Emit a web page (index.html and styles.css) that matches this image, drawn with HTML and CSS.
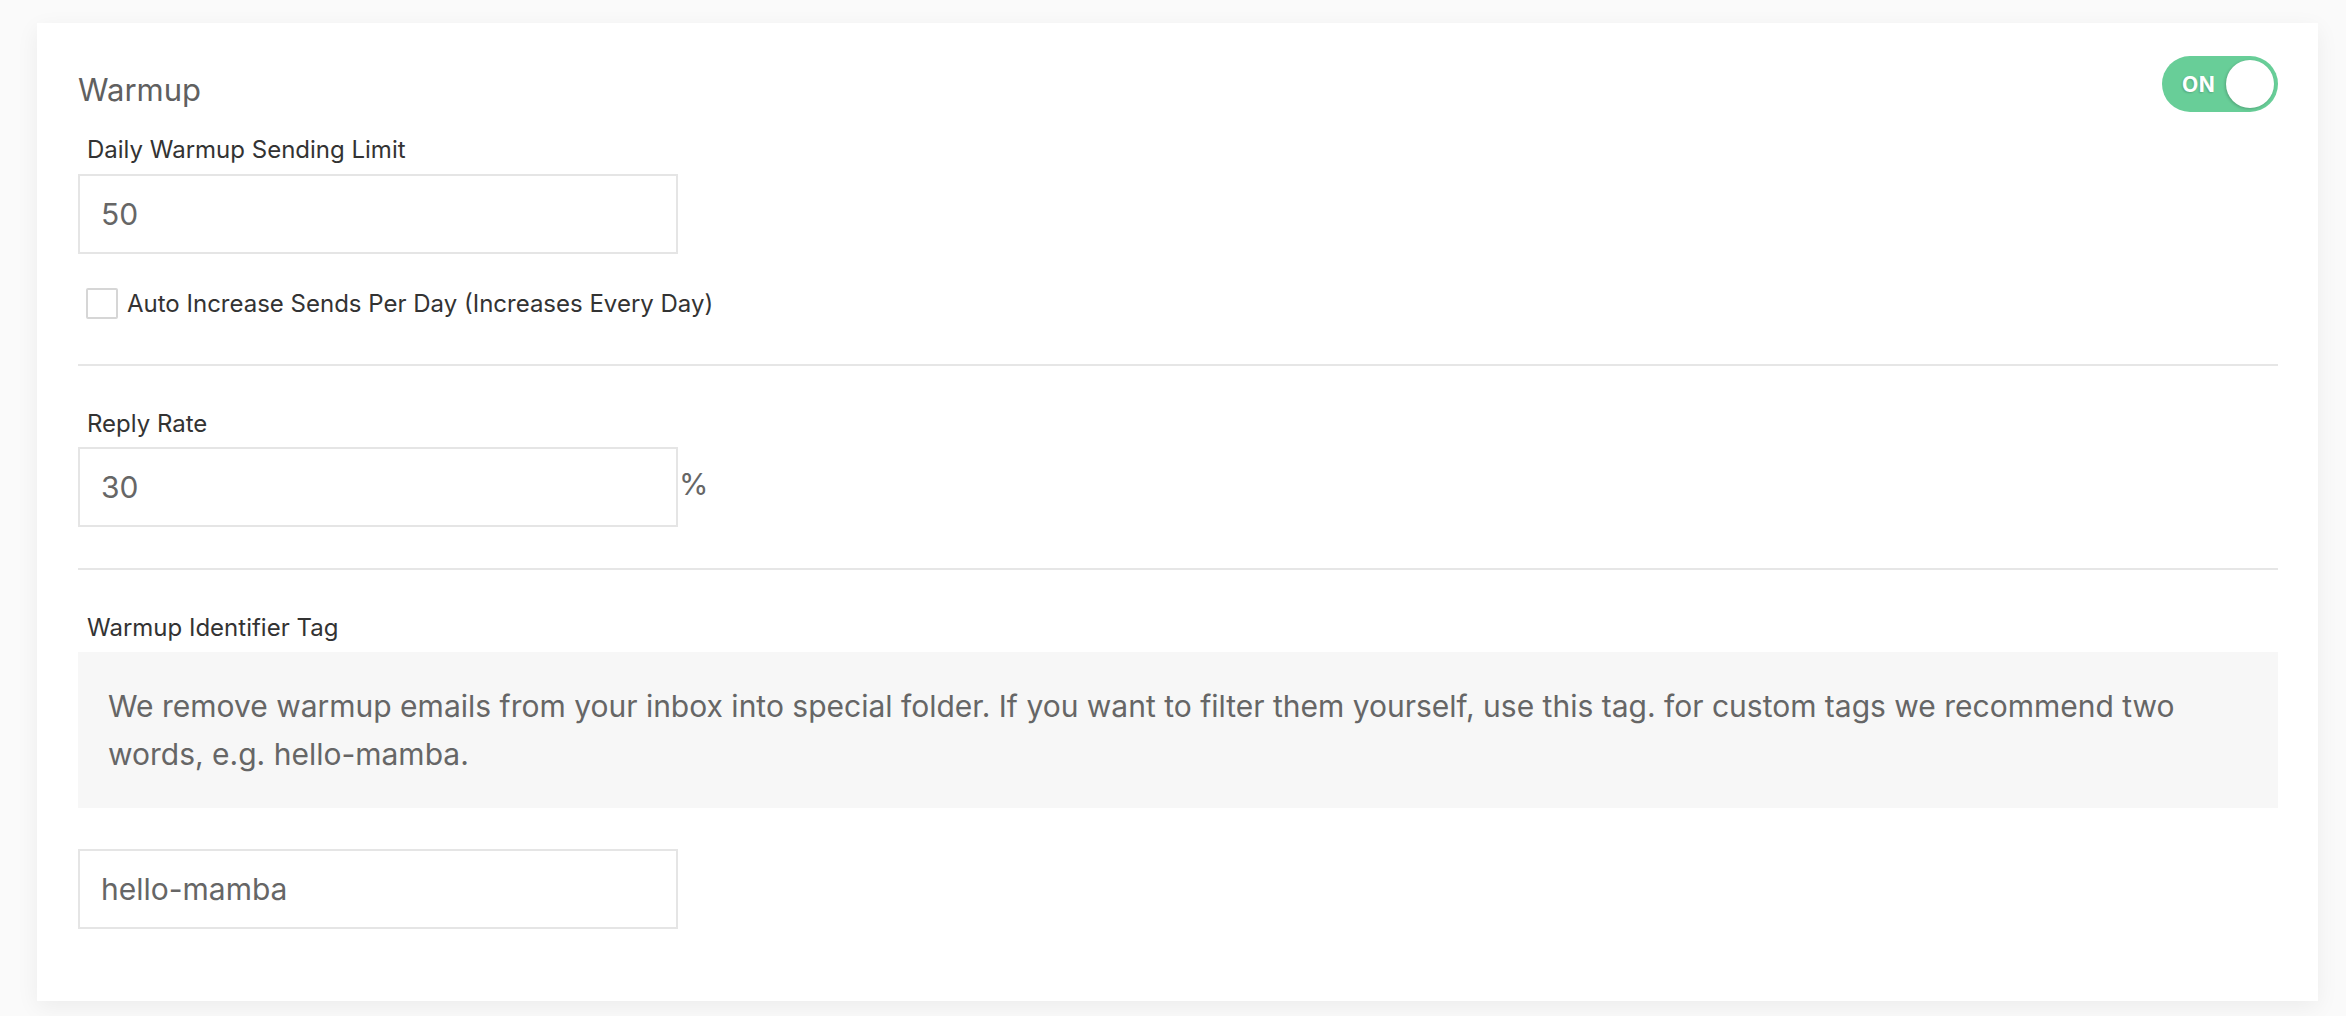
FILE: index.html
```html
<!DOCTYPE html>
<html lang="en">
<head>
<meta charset="utf-8">
<title>Warmup</title>
<link rel="stylesheet" href="styles.css">
</head>
<body>
<div class="page">
  <section class="card">
    <div class="header">
      <h2 class="title">Warmup</h2>
      <div class="toggle">
        <span class="toggle-text">ON</span>
        <span class="knob"></span>
      </div>
    </div>

    <label class="field-label first">Daily Warmup Sending Limit</label>
    <div class="input">50</div>
    <div class="check-row">
      <span class="checkbox"></span>
      <span class="check-label">Auto Increase Sends Per Day (Increases Every Day)</span>
    </div>

    <div class="divider"></div>

    <label class="field-label second">Reply Rate</label>
    <div class="input-row">
      <div class="input">30</div>
      <span class="suffix">%</span>
    </div>

    <div class="divider second-divider"></div>

    <label class="field-label third">Warmup Identifier Tag</label>
    <div class="note">We remove warmup emails from your inbox into special folder. If you want to filter them yourself, use this tag. for custom tags we recommend two words, e.g. hello-mamba.</div>
    <div class="input tag-input">hello-mamba</div>
  </section>
</div>
</body>
</html>
```

FILE: styles.css
```css
html, body {
  margin: 0;
  padding: 0;
}
body {
  background: #fafafa;
  font-family: Inter, "Noto Sans", "Liberation Sans", sans-serif;
  width: 2346px;
  height: 1016px;
  overflow: hidden;
}
.page {
  padding: 23px 28px 0 37px;
}
.card {
  background: #ffffff;
  box-shadow: 0 6px 22px rgba(0, 0, 0, 0.06);
  padding: 33px 40px 72px 41px;
  display: flex;
  flex-direction: column;
}
.header {
  display: flex;
  justify-content: space-between;
  align-items: flex-start;
  height: 56px;
}
.title {
  margin: 0;
  padding-top: 14px;
  font-size: 31px;
  line-height: 40px;
  font-weight: 400;
  color: #606060;
}
.toggle {
  width: 116px;
  height: 56px;
  border-radius: 28px;
  background: #68ce98;
  display: flex;
  align-items: center;
  justify-content: space-between;
  padding: 0 4px 0 20px;
  box-sizing: border-box;
}
.toggle-text {
  color: #ffffff;
  font-weight: 700;
  font-size: 21px;
  letter-spacing: 0.5px;
  text-shadow: -1px 1px 2px rgba(0, 0, 0, 0.18);
}
.knob {
  width: 48px;
  height: 48px;
  border-radius: 50%;
  background: #ffffff;
  box-shadow: -1px 1px 3px rgba(0, 0, 0, 0.2);
}
.field-label {
  display: block;
  font-size: 24px;
  line-height: 30px;
  color: #333333;
  margin-left: 9px;
}
.field-label.first {
  margin-top: 23px;
  margin-bottom: 9px;
}
.field-label.second {
  margin-top: 43px;
  margin-bottom: 8px;
}
.field-label.third {
  margin-top: 43px;
  margin-bottom: 9px;
}
.input {
  width: 600px;
  height: 80px;
  box-sizing: border-box;
  border: 2px solid #e5e5e5;
  padding: 0 21px;
  display: flex;
  align-items: center;
  font-size: 30px;
  color: #666666;
  background: #ffffff;
}
.check-row {
  display: flex;
  align-items: center;
  margin-top: 33px;
  margin-left: 8px;
  height: 32px;
}
.checkbox {
  width: 32px;
  height: 31px;
  box-sizing: border-box;
  border: 2px solid #d6d6d6;
  border-radius: 2px;
  background: #ffffff;
  margin-right: 9px;
}
.check-label {
  font-size: 24px;
  color: #333333;
}
.divider {
  height: 2px;
  background: #e6e6e6;
  margin-top: 45px;
}
.second-divider {
  margin-top: 41px;
}
.input-row {
  display: flex;
  align-items: center;
}
.suffix {
  font-size: 30px;
  color: #666666;
  margin-left: 1px;
  margin-top: -6px;
}
.note {
  background: #f7f7f7;
  padding: 30px 30px;
  font-size: 30px;
  line-height: 48px;
  color: #666666;
}
.tag-input {
  margin-top: 41px;
}
```
